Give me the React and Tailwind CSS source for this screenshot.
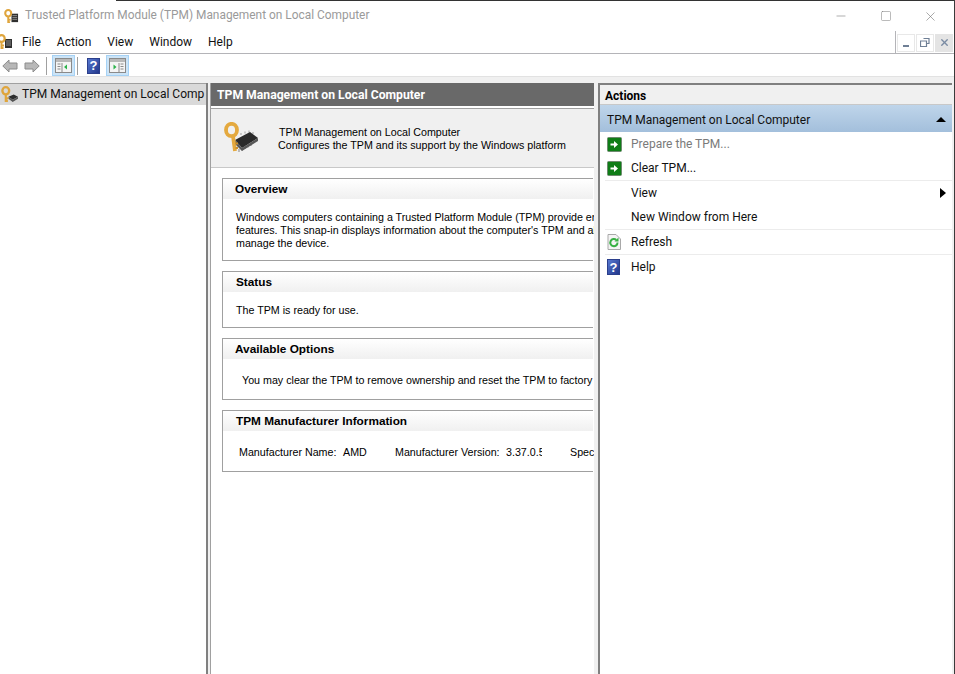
import { Minus, Square, X } from 'lucide-react'

const UI = "font-['Roboto','Noto_Sans',sans-serif]"
const MS = "font-['Liberation_Sans',Arial,sans-serif]"

function KeyIcon({ size = 16, low }) {
  return (
    <svg width={size} height={size} viewBox="0 0 16 16" className="shrink-0">
      {low ? (
        <>
          <path d="M7 10l5-2 4 2-5 3z" fill="#2c2c2c" />
          <path d="M7 10l4 3v2l-4-3zM11 13l5-3v2l-5 3z" fill="#555" />
        </>
      ) : (
        <>
          <rect x="8" y="5" width="7" height="9" fill="#2f2f2f" />
          <path d="M9 7h5M9 9h5M9 11h5" stroke="#8f8f8f" strokeWidth="1" />
        </>
      )}
      <ellipse cx="4.500" cy="4.500" rx="3.200" ry="3.400" fill="none" stroke="#dfa53d" strokeWidth="2.200" />
      <path d="M4.500 7.500V15M4.500 11.500h2.500M4.500 14h2" stroke="#dfa53d" strokeWidth="2" fill="none" />
    </svg>
  )
}

function ChipKey() {
  return (
    <svg width="34" height="32" viewBox="0 0 34 32" className="shrink-0">
      <path d="M15 27v3M18 25.500v3M21 24v3M24 22.500v3M27 21v3" stroke="#a4a4a4" strokeWidth="1.400" />
      <path d="M17 13v-2M21 11.500v-2M25 10.500v-2M29 12v-2" stroke="#b5b5b5" strokeWidth="1.400" />
      <path d="M11 18l15-8 8 6-16 10z" fill="#2a2a2a" />
      <path d="M18 26l16-10v3l-16 10zM11 18l7 8v3l-7-7z" fill="#575757" />
      <ellipse cx="7.500" cy="8" rx="5.500" ry="6.200" fill="none" stroke="#e4a93f" strokeWidth="3.800" />
      <path d="M9 14l2 15" stroke="#e4a93f" strokeWidth="3.800" />
      <path d="M11 21.500h3M11.500 26h2.500" stroke="#c98f2c" strokeWidth="2" />
    </svg>
  )
}

function GreyArrow({ flip }) {
  return (
    <svg width="16" height="14" viewBox="0 0 16 14" className={flip ? 'scale-x-[-1]' : ''}>
      <path d="M.800 7l6.200-6V4h8v6H7v3z" fill="#b8b8b8" stroke="#8c8c8c" strokeWidth="1" />
    </svg>
  )
}

function PaneIcon({ side }) {
  return (
    <svg width="17" height="15" viewBox="0 0 17 15">
      <rect x="0.500" y="0.500" width="16" height="14" fill="#f4f4f4" stroke="#8a8a8a" />
      <rect x="1" y="1" width="15" height="3" fill="#b9b9b9" />
      {side === 'left' ? (
        <>
          <path d="M2.500 6h3M2.500 8.500h3M2.500 11h3M7 5v9" stroke="#8a8a8a" />
          <path d="M12 6.500v5l-3-2.500z" fill="#2bb24a" />
        </>
      ) : (
        <>
          <path d="M11.500 6h3M11.500 8.500h3M11.500 11h3M10 5v9" stroke="#8a8a8a" />
          <path d="M4.500 6.500v5l3-2.500z" fill="#2bb24a" />
        </>
      )}
    </svg>
  )
}

function HelpIcon({ width = 13, height = 16 }) {
  return (
    <div
      className={`flex items-center justify-center bg-gradient-to-br from-[#5878d0] to-[#22378c] border border-[#2b3f8c] text-white font-bold text-[13px] leading-none shrink-0 ${MS}`}
      style={{ width, height }}
    >
      ?
    </div>
  )
}

function GreenArrow() {
  return (
    <svg width="15" height="15" viewBox="0 0 15 15" className="shrink-0">
      <rect x="0.500" y="0.500" width="14" height="14" rx="1" fill="#0f7d17" stroke="#6f8a70" />
      <path d="M3.500 6.500h3.500V4l4 3.500-4 3.500V8.500H3.500z" fill="#fff" />
    </svg>
  )
}

function RefreshIcon() {
  return (
    <svg width="14" height="16" viewBox="0 0 14 16" className="shrink-0">
      <path d="M1 .500h8l4.500 4.500v10.500H1z" fill="#f4f4f4" stroke="#a9a9a9" />
      <path d="M10.500 8.500a3.600 3.600 0 1 1-1.200-2.600" fill="none" stroke="#37b043" strokeWidth="2" />
      <path d="M7.500 7.500h4v-4z" fill="#37b043" />
    </svg>
  )
}

function Section({ title, className, children, titleClass }) {
  return (
    <section className={`border border-[#a0a0a0] border-r-0 bg-white ${className}`}>
      <div className="h-[20px] pt-[1px] bg-gradient-to-b from-white to-[#f0f0f0] flex items-center">
        <h2 className={`text-[11.800px] font-bold text-black leading-none ${MS} ${titleClass}`}>{title}</h2>
      </div>
      {children}
    </section>
  )
}

function ActionRow({ icon, label, muted, arrow, divider }) {
  return (
    <div className={`flex items-center ${divider ? 'h-[25px] border-b border-[#ececec]' : 'h-[24px]'}`}>
      <div className="w-[26px] pl-[2px] flex items-center">{icon}</div>
      <span className={`text-[12px] ${muted ? 'text-[#7a7a7a]' : 'text-[#111]'}`}>{label}</span>
      {arrow && <div className="ml-auto mr-[6px] w-0 h-0 border-y-[5px] border-y-transparent border-l-[6px] border-l-black" />}
    </div>
  )
}

export default function App() {
  return (
    <div className={`w-[955px] h-[674px] bg-white overflow-hidden flex flex-col border-r border-[#3a3a3a] ${UI}`}>
      {/* title bar */}
      <div className="h-[31px] shrink-0 flex flex-col">
        <div className="flex h-px">
          <div className="w-[116px]" />
          <div className="flex-1 bg-[#333]" />
        </div>
        <div className="flex-1 flex items-center pl-[4px]">
          <KeyIcon size={15} />
          <span className="ml-[6px] text-[11.900px] text-[#9a9a9a]">
            Trusted Platform Module (TPM) Management on Local Computer
          </span>
          <div className="ml-auto flex items-center text-[#777]">
            <Minus size={14} strokeWidth={1} className="mr-[32px]" />
            <Square size={12} strokeWidth={1} className="mr-[31px]" />
            <X size={15} strokeWidth={1} className="mr-[16px]" />
          </div>
        </div>
      </div>

      {/* menu bar */}
      <div className="h-[23px] shrink-0 flex items-center">
        <div className="flex-1 h-full flex items-center border-b border-[#b4b4b8]">
          <div className="-ml-[3px] mr-[9px]"><KeyIcon size={16} /></div>
          <nav className="flex gap-[16px] text-[12px] text-[#111]">
            <span>File</span>
            <span>Action</span>
            <span>View</span>
            <span>Window</span>
            <span>Help</span>
          </nav>
        </div>
        <div className="w-[59px] h-full flex items-end">
          <div className="h-[23px] w-px bg-[#b4b4b8]" />
          <div className="flex-1 border-b border-[#b4b4b8] h-[21px] flex items-center gap-px pl-[1px] pb-px">
            <div className="w-[18px] h-[18px] border border-[#e8e8e8] flex items-end justify-center pb-[4px]"><div className="w-[6px] h-[2px] bg-[#6f7f95]" /></div>
            <div className="w-[18px] h-[18px] border border-[#e8e8e8] flex items-center justify-center"><svg width="10" height="9" viewBox="0 0 10 9"><path d="M3.500.500h5.500v5H7M.500 3h6v5.500h-6z" fill="none" stroke="#6f7f95" strokeWidth="1.200" /></svg></div>
            <div className="w-[18px] h-[18px] bg-[#e4e4e4] flex items-center justify-center"><X size={11} strokeWidth={3} className="text-[#7a8ba3]" /></div>
          </div>
        </div>
      </div>

      {/* toolbar */}
      <div className="h-[23px] shrink-0 flex items-center pl-[2px] pt-[1px] border-b border-[#e2e2e2]">
        <GreyArrow />
        <div className="w-[6px]" />
        <GreyArrow flip />
        <div className="w-px h-[18px] bg-[#a0a0a0] ml-[6px] mr-[5px]" />
        <div className="w-[23px] h-[21px] bg-[#cce4f7] border border-[#a6d2f5] flex items-center justify-center"><PaneIcon side="left" /></div>
        <div className="w-px h-[18px] bg-[#a0a0a0] ml-[2px] mr-[9px]" />
        <HelpIcon width={13} height={16} />
        <div className="w-[6px]" />
        <div className="w-[23px] h-[21px] bg-[#cce4f7] border border-[#a6d2f5] flex items-center justify-center"><PaneIcon side="right" /></div>
      </div>

      {/* panes */}
      <div className="flex-1 min-h-0 flex pt-[6px] bg-[#f0f0f0]">
        {/* tree */}
        <aside className="w-[206px] shrink-0 bg-white border-t border-[#a0a0a0] overflow-hidden">
          <div className="h-[21px] bg-[#d9d9d9] flex items-center pl-[1px] pb-[1px] whitespace-nowrap overflow-hidden">
            <KeyIcon size={17} low />
            <span className="ml-[4px] text-[12px] text-[#111]">TPM Management on Local Comp</span>
          </div>
        </aside>
        <div className="w-[2px] shrink-0 bg-[#808080]" />
        <div className="w-[2px] shrink-0" />

        {/* center */}
        <main className="w-[384px] shrink-0 border-l border-[#a0a0a0] bg-white flex flex-col overflow-hidden">
          <div className="h-[23px] shrink-0 bg-[#696969] flex items-center pl-[6px] pt-[2px]">
            <h1 className="text-[12.200px] font-bold text-white">TPM Management on Local Computer</h1>
          </div>
          <div className="h-[2px] bg-white" />
          <div className={`h-[60px] shrink-0 bg-[#f0f0f0] border-t border-[#a0a0a0] border-b border-b-[#c8c8c8] flex items-center pl-[13px] text-[10.700px] leading-[13px] text-black ${MS}`}>
            <ChipKey />
            <div className="ml-[20px] mt-[1px] whitespace-nowrap">
              <div className="ml-[1px]">TPM Management on Local Computer</div>
              <div>Configures the TPM and its support by the Windows platform</div>
            </div>
          </div>

          <div className={`pl-[11px] pr-px flex flex-col whitespace-nowrap overflow-hidden ${MS}`}>
            <Section title="Overview" className="mt-[10px] h-[83px]" titleClass="ml-[12px]">
              <p className="ml-[13px] mt-[12px] text-[10.700px] leading-[13px] text-black">
                Windows computers containing a Trusted Platform Module (TPM) provide enhanced security<br />
                features. This snap-in displays information about the computer's TPM and allows<br />
                manage the device.
              </p>
            </Section>
            <Section title="Status" className="mt-[10px] h-[57px]" titleClass="ml-[13px]">
              <p className="ml-[13px] mt-[13px] text-[10.700px] text-black leading-none">The TPM is ready for use.</p>
            </Section>
            <Section title="Available Options" className="mt-[10px] h-[62px]" titleClass="ml-[12px]">
              <p className="ml-[19px] mt-[16px] text-[10.700px] text-black leading-none">You may clear the TPM to remove ownership and reset the TPM to factory defaults.</p>
            </Section>
            <Section title="TPM Manufacturer Information" className="mt-[10px] h-[62px]" titleClass="ml-[13px]">
              <div className="flex ml-[16px] mt-[16px] text-[10.700px] text-black leading-none">
                <span className="w-[104px] shrink-0">Manufacturer Name:</span>
                <span className="w-[52px] shrink-0">AMD</span>
                <span className="w-[111px] shrink-0">Manufacturer Version:</span>
                <span className="w-[36px] shrink-0 overflow-hidden">3.37.0.5</span>
                <span className="ml-[28px] shrink-0">Specification Version:</span>
              </div>
            </Section>
          </div>
        </main>

        <div className="w-[4px] shrink-0" />

        {/* actions */}
        <aside className="flex-1 min-w-0 bg-white border-l-2 border-l-[#808080] border-t-2 border-t-[#808080] mr-[2px]">
          <div className="h-[20px] pt-[2px] bg-[#f0f0f0] flex items-center pl-[5px] border-b border-[#c8c8c8]">
            <h2 className="text-[12px] font-bold text-black">Actions</h2>
          </div>
          <div className="h-[27px] pt-[2px] bg-gradient-to-b from-[#bfd5ea] to-[#a3bfdc] flex items-center pl-[7px] pr-[6px]">
            <span className="text-[12px] text-[#111]">TPM Management on Local Computer</span>
            <div className="ml-auto w-0 h-0 border-x-[5px] border-x-transparent border-b-[5px] border-b-black" />
          </div>
          <div className="pl-[5px]">
            <ActionRow icon={<GreenArrow />} label="Prepare the TPM..." muted />
            <ActionRow icon={<GreenArrow />} label="Clear TPM..." divider />
            <ActionRow label="View" arrow />
            <ActionRow label="New Window from Here" divider />
            <ActionRow icon={<RefreshIcon />} label="Refresh" divider />
            <ActionRow icon={<HelpIcon width={13} height={16} />} label="Help" />
          </div>
        </aside>
      </div>
    </div>
  )
}
